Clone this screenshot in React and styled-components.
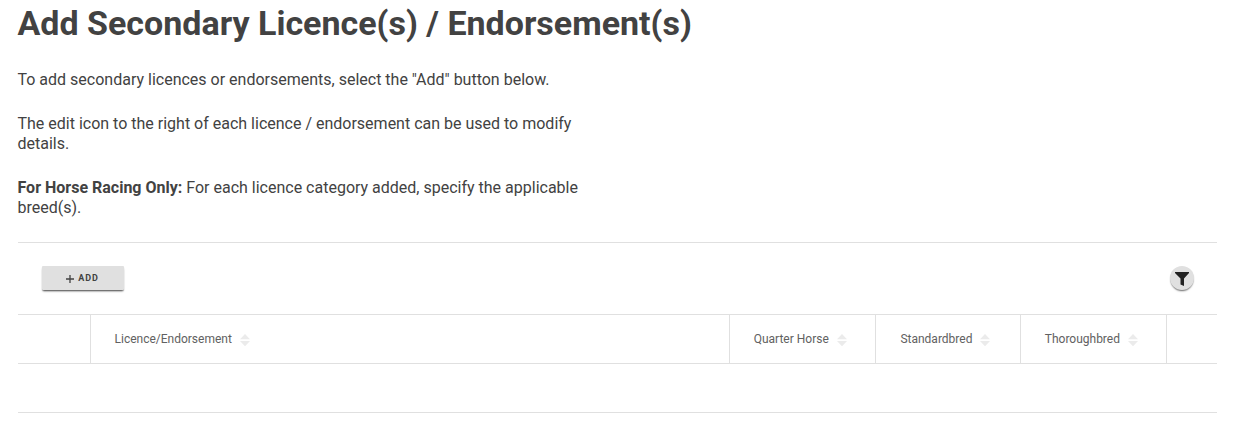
import React from 'react';
import styled, { createGlobalStyle } from 'styled-components';

const Global = createGlobalStyle`
  * { box-sizing: border-box; }
  body { margin: 0; background: #fff; color: #424242; font-family: Roboto, sans-serif; font-size: 16px; line-height: 20px; }
`;
const Page = styled.main`
  width: 1199.5px;
  margin-left: 17.5px;
  padding-top: 1px;
`;
const Title = styled.h1`
  margin: 0;
  font-size: 34px;
  line-height: 44px;
  font-weight: 700;
  white-space: nowrap;
`;
const Intro = styled.div`
  width: 576px;
  padding: 25px 0 24px;
  display: grid;
  gap: 24px;
`;
const Text = styled.p`
  margin: 0;
`;
const Panel = styled.section`
  border-top: 1px solid #e0e0e0;
  border-bottom: 1px solid #e0e0e0;
`;
const Toolbar = styled.div`
  height: 71px;
  padding: 23px 23px 0 24px;
  display: flex;
  align-items: flex-start;
  justify-content: space-between;
`;
const AddButton = styled.button`
  width: 82px;
  height: 24px;
  padding: 0;
  border: 0;
  border-radius: 1px;
  background: #e0e0e0;
  color: #424242;
  box-shadow: 0 2px 2px -1px rgba(0, 0, 0, 0.65), 0 1px 1px rgba(0, 0, 0, 0.2);
  display: flex;
  align-items: center;
  justify-content: center;
  gap: 4px;
  font: 700 9px/12px Roboto, sans-serif;
  letter-spacing: 0.9px;
`;
const FilterButton = styled.button`
  width: 24px;
  height: 24px;
  padding: 0;
  border: 0;
  border-radius: 50%;
  background: #e0e0e0;
  box-shadow: 0 2px 2px -1px rgba(0, 0, 0, 0.5), 0 1px 1px rgba(0, 0, 0, 0.15);
  display: grid;
  place-items: center;
`;
const HeaderRow = styled.div`
  display: grid;
  grid-template-columns: 73px 639.2px 146.7px 144.4px 145.8px 1fr;
  height: 50px;
  border-top: 1px solid #e0e0e0;
  border-bottom: 1px solid #e0e0e0;
`;
const Cell = styled.div`
  padding: 0 0 0 24px;
  border-right: 1px solid #e0e0e0;
  display: flex;
  align-items: center;
  gap: 8px;
  color: #616161;
  font-size: 12px;
  white-space: nowrap;
  &:last-child { border-right: 0; }
`;
const SortIcon = styled.svg`
  margin-top: 2px;
  fill: #ebebeb;
`;
const EmptyRow = styled.div`
  height: 48px;
`;
const Sort = () => (
  <SortIcon width="10" height="12" viewBox="0 0 10 12"><path d="M0 5.300 5 0l5 5.300zM0 7h10l-5 5.300z" /></SortIcon>
);
const columns = ['', 'Licence/Endorsement', 'Quarter Horse', 'Standardbred', 'Thoroughbred', ''];

export default function App() {
  return (
    <Page>
      <Global />
      <Title>Add Secondary Licence(s) / Endorsement(s)</Title>
      <Intro>
        <Text>To add secondary licences or endorsements, select the "Add" button below.</Text>
        <Text>The edit icon to the right of each licence / endorsement can be used to modify details.</Text>
        <Text><b>For Horse Racing Only:</b> For each licence category added, specify the applicable breed(s).</Text>
      </Intro>
      <Panel>
        <Toolbar>
          <AddButton>
            <svg width="8" height="9" viewBox="0 0 8 9" stroke="currentColor" strokeWidth="1.3"><path d="M4 1v8M0 5h8" /></svg>
            ADD
          </AddButton>
          <FilterButton aria-label="Filter">
            <svg width="14" height="16" viewBox="0 0 14 16" fill="#212121"><path d="M0 2h14v1L9 8.500V16l-3.500-1.500V8.500L0 3z" /></svg>
          </FilterButton>
        </Toolbar>
        <HeaderRow>
          {columns.map((c, i) => <Cell key={i}>{c && <>{c}<Sort /></>}</Cell>)}
        </HeaderRow>
        <EmptyRow />
      </Panel>
    </Page>
  );
}
